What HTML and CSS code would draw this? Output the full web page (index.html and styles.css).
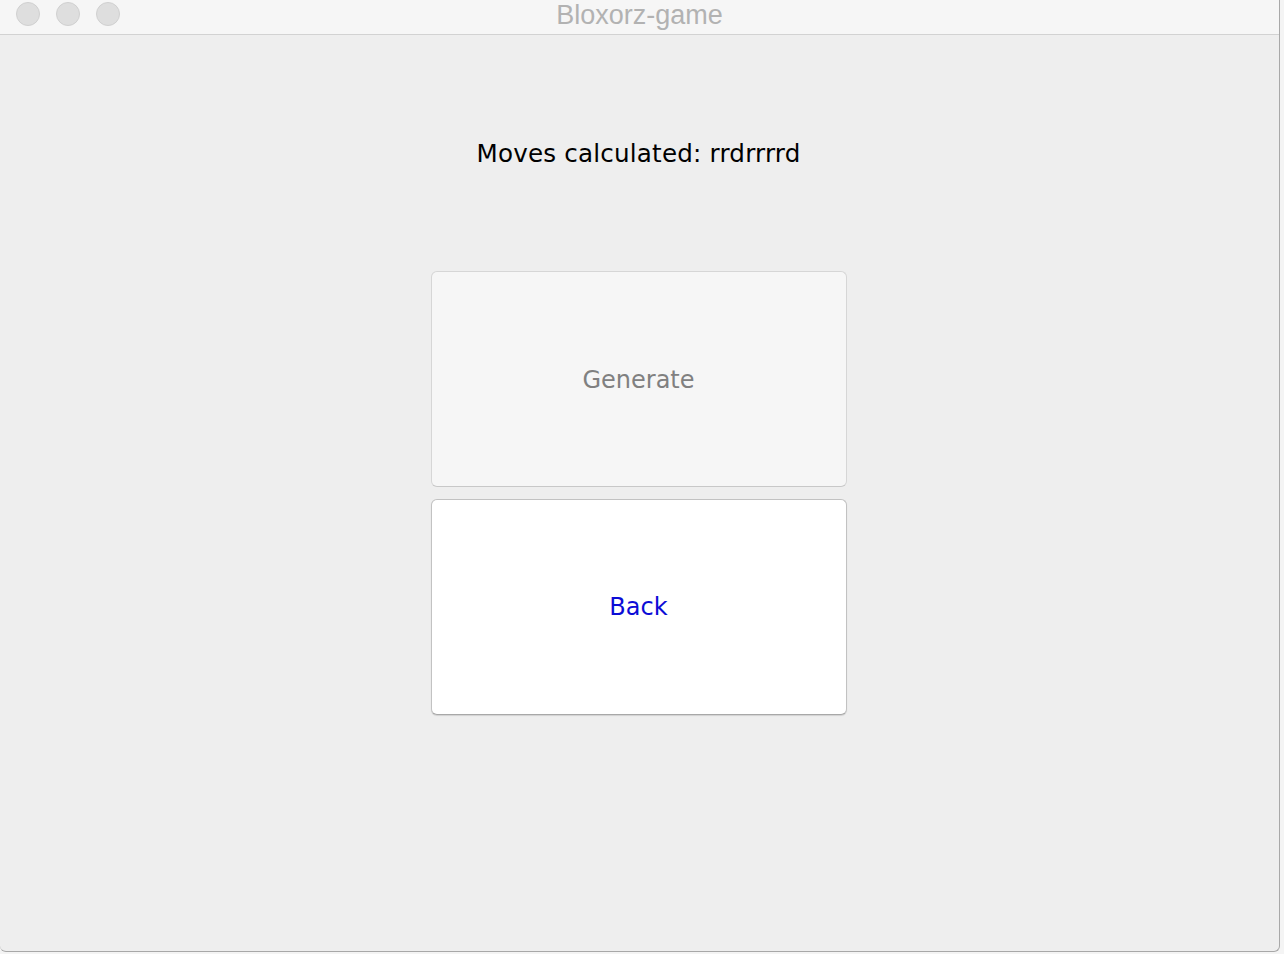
FILE: index.html
```html
<!DOCTYPE html>
<html>
<head>
<meta charset="utf-8">
<link rel="stylesheet" href="styles.css">
</head>
<body>
<div class="window">
  <div class="titlebar">
    <div class="lights">
      <span class="light"></span>
      <span class="light"></span>
      <span class="light"></span>
    </div>
    <div class="title">Bloxorz-game</div>
  </div>
  <div class="content">
    <div class="label">Moves calculated: rrdrrrrd</div>
    <div class="buttons">
      <button class="btn btn-generate">Generate</button>
      <button class="btn btn-back">Back</button>
    </div>
  </div>
</div>
</body>
</html>
```
FILE: styles.css
```css
html, body {
  margin: 0;
  padding: 0;
  background: #f4f4f4;
  width: 1284px;
  height: 954px;
  overflow: hidden;
}
.window {
  width: 1279px;
  height: 951px;
  background: #eeeeee;
  border-right: 1px solid #a8a8a8;
  border-bottom: 1px solid #a8a8a8;
  border-radius: 0 0 6px 6px;
  box-sizing: content-box;
  display: flex;
  flex-direction: column;
  overflow: hidden;
}
.titlebar {
  height: 34px;
  background: #f6f6f6;
  border-bottom: 1px solid #d2d2d2;
  position: relative;
  display: flex;
  align-items: center;
  justify-content: center;
}
.lights {
  position: absolute;
  left: 16px;
  top: 2px;
  display: flex;
  gap: 16px;
}
.light {
  width: 24px;
  height: 24px;
  border-radius: 50%;
  background: #dedede;
  border: 1px solid #d0d0d0;
  box-sizing: border-box;
}
.title {
  font-family: "Liberation Sans", Arial, sans-serif;
  font-size: 27px;
  color: #b2b2b2;
  margin-top: -4px;
}
.content {
  flex: 1;
  display: flex;
  flex-direction: column;
  align-items: center;
}
.label {
  font-family: "DejaVu Sans", sans-serif;
  font-size: 24.6px;
  color: #000;
  margin-top: 104px;
  margin-left: -2px;
  letter-spacing: 0.2px;
}
.buttons {
  margin-top: 103px;
  margin-left: -2px;
  display: flex;
  flex-direction: column;
  gap: 12px;
}
.btn {
  width: 416px;
  height: 216px;
  border-radius: 6px;
  font-family: "DejaVu Sans", sans-serif;
  font-size: 24px;
  padding: 0;
  margin: 0;
}
.btn-generate {
  background: #f6f6f6;
  border: 1px solid #d6d6d6;
  border-bottom-color: #c8c8c8;
  color: #808080;
  padding-top: 1px;
}
.btn-back {
  background: #ffffff;
  border: 1px solid #c2c2c2;
  border-bottom-color: #a8a8a8;
  box-shadow: 0 1px 1px rgba(0,0,0,0.12);
  color: #0c0cd6;
  padding-top: 0;
}
```
